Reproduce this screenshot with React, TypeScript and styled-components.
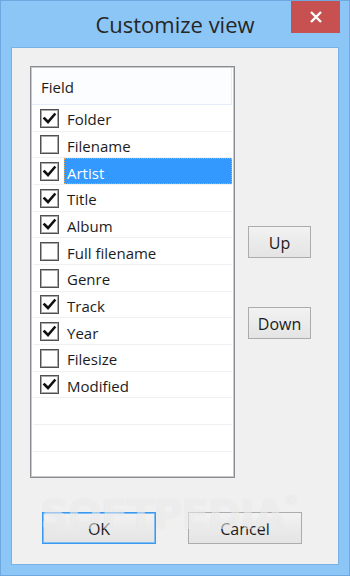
import React from 'react';
import styled, { createGlobalStyle } from 'styled-components';

const Global = createGlobalStyle`
  html, body { margin: 0; padding: 0; }
  body {
    width: 350px;
    height: 576px;
    overflow: hidden;
    font-family: "Open Sans", "Noto Sans", "DejaVu Sans", sans-serif;
    -webkit-font-smoothing: antialiased;
  }
`;

const Window = styled.div`
  width: 350px;
  height: 576px;
  box-sizing: border-box;
  background: #8cc6f6;
  border: 1px solid #6ea8df;
  display: flex;
  flex-direction: column;
`;

const TitleBar = styled.div`
  height: 46px;
  display: grid;
  grid-template-columns: 1fr auto 1fr;
`;

const Title = styled.div`
  grid-column: 2;
  font-size: 22px;
  line-height: 46px;
  color: #262626;
`;

const CloseButton = styled.div`
  grid-column: 3;
  justify-self: end;
  align-self: start;
  width: 49px;
  height: 32px;
  margin-right: 9px;
  background: #c75050;
  display: flex;
  align-items: center;
  justify-content: center;
`;

const Body = styled.div`
  position: relative;
  flex: 1;
  margin: 0 10px 10px 10px;
  border: 1px solid #78b1e6;
  background: #f0f0f0;
  padding: 18px 0 0 18px;
  display: flex;
  flex-direction: column;
`;

const MainRow = styled.div`
  display: flex;
`;

const ListBox = styled.div`
  width: 205px;
  height: 412px;
  box-sizing: border-box;
  border: 1px solid #8a8d92;
  box-shadow: inset 0 0 0 1px #c9c9c9;
  background: #fff;
  padding: 1px;
  overflow: hidden;
  display: flex;
  flex-direction: column;
`;

const Header = styled.div`
  height: 37px;
  flex-shrink: 0;
  box-sizing: border-box;
  background: #fcfdfe;
  border-bottom: 1px solid #e3eefa;
  border-right: 1px solid #e3eefa;
  margin-right: 1px;
  display: flex;
  align-items: center;
  padding: 2px 0 0 9px;
  font-size: 15px;
  color: #1c1c1c;
`;

const Row = styled.div`
  height: calc(80px / 3);
  flex-shrink: 0;
  box-sizing: border-box;
  border-bottom: 1px solid #f0f0f0;
  margin: 0 1px;
  display: flex;
  align-items: center;
  padding: 1px 0 0 7px;
`;

const Box = styled.div`
  width: 19px;
  height: 19px;
  box-sizing: border-box;
  border: 1px solid #505050;
  box-shadow: inset 0 0 0 1px #a9a9a9;
  background: #fff;
  display: flex;
  align-items: center;
  justify-content: center;
  flex-shrink: 0;
`;

const Label = styled.div<{ $selected?: boolean }>`
  flex: 1;
  align-self: stretch;
  margin: -1px 0 0 5px;
  padding: 3px 0 0 2px;
  box-sizing: border-box;
  display: flex;
  align-items: center;
  font-size: 15px;
  color: ${(p) => (p.$selected ? '#ffffff' : '#1c1c1c')};
  background: ${(p) => (p.$selected ? '#3399ff' : 'transparent')};
  border: 1px dotted ${(p) => (p.$selected ? '#e8a04c' : 'transparent')};
`;

const SideColumn = styled.div`
  display: flex;
  flex-direction: column;
  gap: 49px;
  margin-left: 13px;
  padding-top: 160px;
`;

const Button = styled.div<{ $w: number; $default?: boolean }>`
  width: ${(p) => p.$w}px;
  height: 32px;
  box-sizing: border-box;
  background: linear-gradient(#f2f2f2, #e4e4e4);
  border: 1px solid ${(p) => (p.$default ? '#3b98ee' : '#acacac')};
  box-shadow: ${(p) => (p.$default ? 'inset 0 0 0 1px #7fbef4' : 'none')};
  display: flex;
  align-items: center;
  justify-content: center;
  padding-top: 1px;
  font-size: 16px;
  color: #1c1c1c;
`;

const Footer = styled.div`
  display: flex;
  gap: 32px;
  margin-top: 34px;
  padding-left: 12px;
`;

const Watermark = styled.div`
  position: absolute;
  left: 28px;
  top: 444px;
  font-family: "DejaVu Sans", sans-serif;
  font-weight: bold;
  font-size: 40px;
  letter-spacing: -1px;
  color: rgba(255, 255, 255, 0.55);
  text-shadow: 0 0 1px rgba(0, 0, 0, 0.1);
  pointer-events: none;
  sup {
    font-size: 14px;
    vertical-align: top;
  }
`;

const Check = () => (
  <svg width="15" height="15" viewBox="0 0 15 15">
    <path d="M2.5 7.5 L6 11 L12.5 3.5" fill="none" stroke="#111" strokeWidth="2.6" strokeLinecap="square" strokeLinejoin="miter" />
  </svg>
);

const fields: { name: string; checked: boolean }[] = [
  { name: 'Folder', checked: true },
  { name: 'Filename', checked: false },
  { name: 'Artist', checked: true },
  { name: 'Title', checked: true },
  { name: 'Album', checked: true },
  { name: 'Full filename', checked: false },
  { name: 'Genre', checked: false },
  { name: 'Track', checked: true },
  { name: 'Year', checked: true },
  { name: 'Filesize', checked: false },
  { name: 'Modified', checked: true },
];

export default function App() {
  return (
    <>
      <Global />
      <Window>
        <TitleBar>
          <Title>Customize view</Title>
          <CloseButton>
            <svg width="12" height="12" viewBox="0 0 12 12">
              <path d="M1 1 L11 11 M11 1 L1 11" stroke="#fff" strokeWidth="2.4" />
            </svg>
          </CloseButton>
        </TitleBar>
        <Body>
          <MainRow>
            <ListBox>
              <Header>Field</Header>
              {fields.map((f) => (
                <Row key={f.name}>
                  <Box>{f.checked && <Check />}</Box>
                  <Label $selected={f.name === 'Artist'}>{f.name}</Label>
                </Row>
              ))}
              <Row />
              <Row />
              <Row />
              <Row />
            </ListBox>
            <SideColumn>
              <Button $w={63}>Up</Button>
              <Button $w={63}>Down</Button>
            </SideColumn>
          </MainRow>
          <Footer>
            <Button $w={114} $default>OK</Button>
            <Button $w={114}>Cancel</Button>
          </Footer>
          <Watermark>
            SOFTPEDIA<sup>®</sup>
          </Watermark>
        </Body>
      </Window>
    </>
  );
}
